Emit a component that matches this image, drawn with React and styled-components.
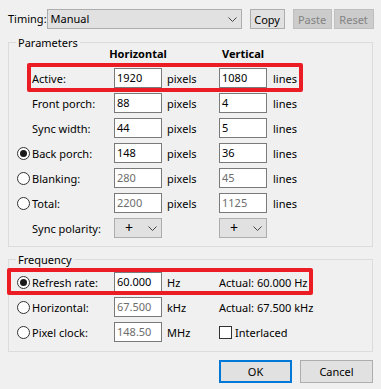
import React from 'react';
import styled, { createGlobalStyle } from 'styled-components';

const Global = createGlobalStyle`
  html, body { margin: 0; padding: 0; background: #f0f0f0; }
  body {
    font-family: "Noto Sans", "Segoe UI", sans-serif;
    font-size: 11px;
    color: #000;
  }
`;

const Dialog = styled.div`
  width: 381px;
  height: 389px;
  box-sizing: border-box;
  padding: 9px 8px 0 8px;
  background: #f0f0f0;
  display: flex;
  flex-direction: column;
`;

const TopBar = styled.div`
  display: flex;
  align-items: center;
  height: 20px;
`;

const TopLabel = styled.span`
  flex: 0 0 38px;
  line-height: 20px;
  white-space: nowrap;
`;

const Combo = styled.div`
  flex-shrink: 0;
  box-sizing: border-box;
  width: ${p => p.$w}px;
  height: 20px;
  border: 1px solid #adadad;
  background: #e1e1e1;
  display: flex;
  align-items: center;
  padding: 0 4px 0 ${p => p.$padL}px;
`;

const ComboText = styled.span`
  flex: 1;
  line-height: 18px;
`;

const PlusText = styled.span`
  width: 14px;
  text-align: center;
  font-size: 14px;
  line-height: 18px;
`;

const Chevron = () => (
  <svg width="9" height="5" viewBox="0 0 9 5" style={{ marginLeft: 'auto' }}>
    <polyline points="0.5,0.5 4.5,4.5 8.5,0.5" fill="none" stroke="#444" strokeWidth="1" />
  </svg>
);

const Btn = styled.button`
  flex-shrink: 0;
  box-sizing: border-box;
  width: ${p => p.$w}px;
  height: ${p => p.$h || 20}px;
  margin: 0 0 0 ${p => p.$ml || 0}px;
  padding: 0;
  font: inherit;
  border: ${p => (p.$default ? '2px solid #0078d7' : p.disabled ? '1px solid #bfbfbf' : '1px solid #adadad')};
  background: ${p => (p.disabled ? '#cccccc' : '#e1e1e1')};
  color: ${p => (p.disabled ? '#838383' : '#000')};
  border-radius: 0;
`;

const Group = styled.section`
  position: relative;
  margin-top: ${p => p.$mt}px;
  border: 1px solid #dcdcdc;
  padding: ${p => p.$pad};
  display: flex;
  flex-direction: column;
  gap: 5px;
`;

const Legend = styled.span`
  position: absolute;
  top: -8px;
  left: 7px;
  padding: 0 2px;
  background: #f0f0f0;
  line-height: 15px;
`;

const Row = styled.div`
  position: relative;
  display: grid;
  grid-template-columns: 15px 82px 48px 57px 48px auto;
  align-items: center;
  height: ${p => p.$h || 20}px;
  margin-bottom: ${p => p.$mb || 0}px;
`;

const HeadCell = styled.div`
  grid-column: ${p => p.$col};
  display: flex;
  justify-content: center;
  white-space: nowrap;
  font-weight: 700;
  line-height: 14px;
`;

const Radio = styled.span`
  grid-column: 1;
  box-sizing: border-box;
  width: 13px;
  height: 13px;
  border-radius: 50%;
  border: 1px solid #333;
  background: #fff;
  display: flex;
  align-items: center;
  justify-content: center;
  &::after {
    content: '';
    width: 7px;
    height: 7px;
    border-radius: 50%;
    background: ${p => (p.$checked ? '#1a1a1a' : 'transparent')};
  }
`;

const Label = styled.span`
  grid-column: 2;
  white-space: nowrap;
`;

const Field = styled.div`
  grid-column: ${p => p.$col};
  box-sizing: border-box;
  width: 48px;
  height: 20px;
  border: 1px solid #7a7a7a;
  background: #fff;
  padding: 0 2px;
  line-height: 18px;
  color: ${p => (p.$dim ? '#6d6d6d' : '#000')};
`;

const Unit = styled.span`
  grid-column: ${p => p.$col};
  padding-left: ${p => p.$pl}px;
  white-space: nowrap;
`;

const Wide = styled.div`
  grid-column: 5 / -1;
  display: flex;
  align-items: center;
  gap: 3px;
  white-space: nowrap;
`;

const Check = styled.span`
  box-sizing: border-box;
  width: 13px;
  height: 13px;
  border: 1px solid #333;
  background: #fff;
`;

const Highlight = styled.span`
  position: absolute;
  left: ${p => p.$l}px;
  top: ${p => p.$t}px;
  width: ${p => p.$w}px;
  height: ${p => p.$h}px;
  box-sizing: border-box;
  border: 4px solid #ec1c24;
  border-radius: 2px;
  pointer-events: none;
`;

const ButtonRow = styled.div`
  margin-top: 8px;
  display: flex;
  justify-content: flex-end;
  gap: 8px;
`;

const SizedCombo = styled(Combo)`
  grid-column: ${p => p.$col};
`;

const timingRows = [
  { radio: null, label: 'Active:', h: '1920', v: '1080', hl: true },
  { radio: null, label: 'Front porch:', h: '88', v: '4' },
  { radio: null, label: 'Sync width:', h: '44', v: '5' },
  { radio: 'on', label: 'Back porch:', h: '148', v: '36' },
  { radio: 'off', label: 'Blanking:', h: '280', v: '45', dim: true },
  { radio: 'off', label: 'Total:', h: '2200', v: '1125', dim: true },
];

export default function App() {
  return (
    <>
      <Global />
      <Dialog>
        <TopBar>
          <TopLabel>Timing:</TopLabel>
          <Combo $w={195} $padL={3}>
            <ComboText>Manual</ComboText>
            <Chevron />
          </Combo>
          <Btn $w={35} $ml={8}>Copy</Btn>
          <Btn $w={39} $ml={8} disabled>Paste</Btn>
          <Btn $w={40} $ml={2} disabled>Reset</Btn>
        </TopBar>

        <Group $mt={13} $pad="4px 0 8px 8px">
          <Legend>Parameters</Legend>
          <Row $h={14} $mb={2}>
            <HeadCell $col={3}>Horizontal</HeadCell>
            <HeadCell $col={5}>Vertical</HeadCell>
          </Row>
          {timingRows.map(r => (
            <Row key={r.label}>
              {r.radio && <Radio $checked={r.radio === 'on'} />}
              <Label>{r.label}</Label>
              <Field $col={3} $dim={r.dim}>{r.h}</Field>
              <Unit $col={4} $pl={5}>pixels</Unit>
              <Field $col={5} $dim={r.dim}>{r.v}</Field>
              <Unit $col={6} $pl={6}>lines</Unit>
              {r.hl && <Highlight $l={10} $t={-5} $w={276} $h={29} />}
            </Row>
          ))}
          <Row>
            <Label>Sync polarity:</Label>
            <SizedCombo $col={3} $w={48} $padL={7}>
              <PlusText>+</PlusText>
              <Chevron />
            </SizedCombo>
            <SizedCombo $col={5} $w={48} $padL={7}>
              <PlusText>+</PlusText>
              <Chevron />
            </SizedCombo>
          </Row>
        </Group>

        <Group $mt={12} $pad="12px 0 9px 8px">
          <Legend>Frequency</Legend>
          <Row>
            <Radio $checked />
            <Label>Refresh rate:</Label>
            <Field $col={3}>60.000</Field>
            <Unit $col={4} $pl={5}>Hz</Unit>
            <Wide>Actual: 60.000 Hz</Wide>
            <Highlight $l={-10} $t={-4} $w={306} $h={27} />
          </Row>
          <Row>
            <Radio />
            <Label>Horizontal:</Label>
            <Field $col={3} $dim>67.500</Field>
            <Unit $col={4} $pl={5}>kHz</Unit>
            <Wide>Actual: 67.500 kHz</Wide>
          </Row>
          <Row>
            <Radio />
            <Label>Pixel clock:</Label>
            <Field $col={3} $dim>148.50</Field>
            <Unit $col={4} $pl={5}>MHz</Unit>
            <Wide>
              <Check />
              <span>Interlaced</span>
            </Wide>
          </Row>
        </Group>

        <ButtonRow>
          <Btn $w={73} $h={23} $default>OK</Btn>
          <Btn $w={73} $h={23}>Cancel</Btn>
        </ButtonRow>
      </Dialog>
    </>
  );
}
